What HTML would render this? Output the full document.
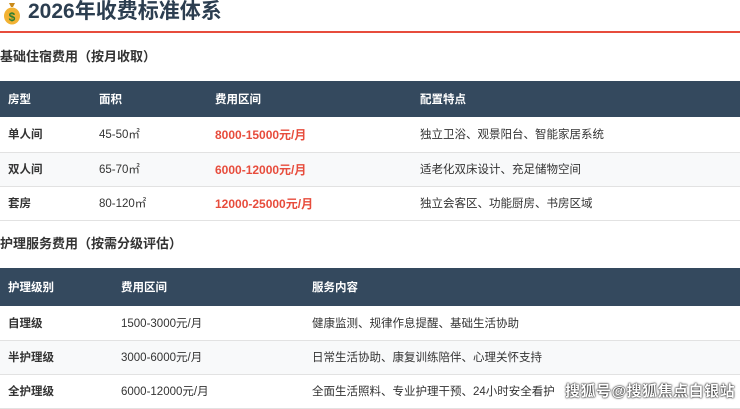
<!DOCTYPE html>
<html><head><meta charset="utf-8"><style>
*{margin:0;padding:0;box-sizing:border-box}
body{width:740px;height:408px;overflow:hidden;background:#fff;font-family:"Liberation Sans","Noto Sans CJK SC",sans-serif;color:#333;position:relative}
.t{position:absolute;left:28px;top:-2px;font-size:21px;font-weight:bold;color:#2c3e50;line-height:28px}
.ic{position:absolute;left:2px;top:1px}
.line{position:absolute;left:0;top:31px;width:740px;height:2px;background:#e74c3c}
.h{position:absolute;left:0;font-size:13px;font-weight:bold;color:#333;line-height:18px}
table{position:absolute;left:0;width:740px;border-collapse:collapse;font-size:11.5px}
th{background:#34495e;color:#fff;text-align:left;font-weight:bold;padding:0 0 0 8px}
td{padding:0 0 0 8px;border-bottom:1px solid #e2e2e2;color:#333}
tr.a td{background:#f8f9fa}
td.b{font-weight:bold}
.r{color:#e74c3c;font-weight:bold;font-size:12px}
.wm{position:absolute;left:565px;top:380px;font-size:15px;color:#fff;font-weight:bold;text-shadow:0 0 2px #000,0 0 1px #000;letter-spacing:0.5px}
</style></head><body>
<svg class="ic" width="20" height="24" viewBox="0 0 20 24"><path d="M7 2h6l-2 4h-2z" fill="#c98a1a"/><ellipse cx="10" cy="15" rx="8" ry="8.5" fill="#f2b233"/><text x="10" y="20" font-size="12" text-anchor="middle" fill="#2e7d32" font-weight="bold" font-family="Liberation Sans">$</text></svg>
<div class="t">2026年收费标准体系</div>
<div class="line"></div>
<div class="h" style="top:48px">基础住宿费用（按月收取）</div>
<table style="top:81px">
<colgroup><col style="width:91px"><col style="width:116px"><col style="width:205px"><col></colgroup>
<tr style="height:36px"><th>房型</th><th>面积</th><th>费用区间</th><th>配置特点</th></tr>
<tr style="height:35px"><td class="b">单人间</td><td>45-50㎡</td><td class="r">8000-15000元/月</td><td>独立卫浴、观景阳台、智能家居系统</td></tr>
<tr class="a" style="height:34px"><td class="b">双人间</td><td>65-70㎡</td><td class="r">6000-12000元/月</td><td>适老化双床设计、充足储物空间</td></tr>
<tr style="height:34px"><td class="b">套房</td><td>80-120㎡</td><td class="r">12000-25000元/月</td><td>独立会客区、功能厨房、书房区域</td></tr>
</table>
<div class="h" style="top:235px">护理服务费用（按需分级评估）</div>
<table style="top:268px">
<colgroup><col style="width:113px"><col style="width:191px"><col></colgroup>
<tr style="height:38px"><th>护理级别</th><th>费用区间</th><th>服务内容</th></tr>
<tr style="height:34px"><td class="b">自理级</td><td>1500-3000元/月</td><td>健康监测、规律作息提醒、基础生活协助</td></tr>
<tr class="a" style="height:34px"><td class="b">半护理级</td><td>3000-6000元/月</td><td>日常生活协助、康复训练陪伴、心理关怀支持</td></tr>
<tr style="height:34px"><td class="b">全护理级</td><td>6000-12000元/月</td><td>全面生活照料、专业护理干预、24小时安全看护</td></tr>
</table>
<div class="wm">搜狐号@搜狐焦点白银站</div>
</body></html>
